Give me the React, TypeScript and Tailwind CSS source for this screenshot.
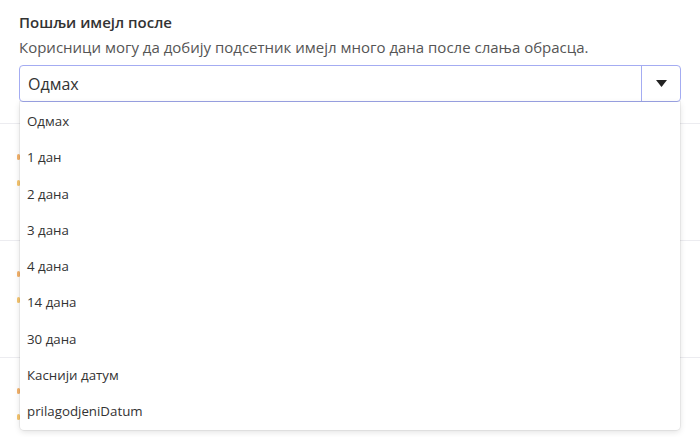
import { useState } from "react";

const OPTIONS = [
  "Одмах",
  "1 дан",
  "2 дана",
  "3 дана",
  "4 дана",
  "14 дана",
  "30 дана",
  "Каснији датум",
  "prilagodjeniDatum",
];

export default function App() {
  const [value, setValue] = useState(OPTIONS[0]);
  const [open, setOpen] = useState(true);

  return (
    <div
      className="relative w-[700px] h-[437px] overflow-hidden bg-white text-[#333]"
      style={{ fontFamily: '"Open Sans", "Noto Sans", sans-serif' }}
    >
      <div className="px-[19px] pt-[11px]">
        <div className="text-[15px] font-semibold leading-[22px] text-[#333]">
          Пошљи имејл после
        </div>
        <div className="mt-[3px] text-[15px] leading-[22px] text-[#555]">
          Корисници могу да добију подсетник имејл много дана после слања обрасца.
        </div>

        <div className="relative mt-[7px]">
          <button
            type="button"
            onClick={() => setOpen(!open)}
            className="flex h-[37px] w-full items-stretch rounded-[4px] border border-[#a4acf2] bg-white text-left"
          >
            <span className="flex flex-1 items-center pl-[8px] text-[16px] text-[#333]">
              {value}
            </span>
            <span className="flex w-[39px] items-center justify-center border-l border-[#a4acf2]">
              <svg width="11" height="7" viewBox="0 0 11 7">
                <path d="M0 0h11L5.5 7z" fill="#222" />
              </svg>
            </span>
          </button>

          {open && (
            <ul className="absolute left-[1px] right-[1px] top-[37px] z-10 rounded-b-[4px] bg-white pt-[2px] shadow-[0_2px_6px_rgba(0,0,0,0.12),0_0_0_1px_rgba(0,0,0,0.05)]">
              {OPTIONS.map((o) => (
                <li
                  key={o}
                  onClick={() => {
                    setValue(o);
                    setOpen(false);
                  }}
                  className="flex h-[36.25px] cursor-pointer items-center px-[7px] text-[13.3px] text-[#333] hover:bg-gray-50"
                >
                  {o}
                </li>
              ))}
            </ul>
          )}
        </div>
      </div>

      {/* page rows behind the open dropdown */}
      <div className="mt-[21px]">
        {[0, 1, 2].map((i) => (
          <div key={i} className="h-[117px] border-t border-[#ececf0]">
            <div className="ml-[17px] flex flex-col gap-[20px] pt-[30px]">
              <span className="h-[6px] w-[3px] rounded-full bg-[#f4b26b]" />
              <span className="h-[6px] w-[3px] rounded-full bg-[#f6c56e]" />
            </div>
          </div>
        ))}
      </div>
    </div>
  );
}
